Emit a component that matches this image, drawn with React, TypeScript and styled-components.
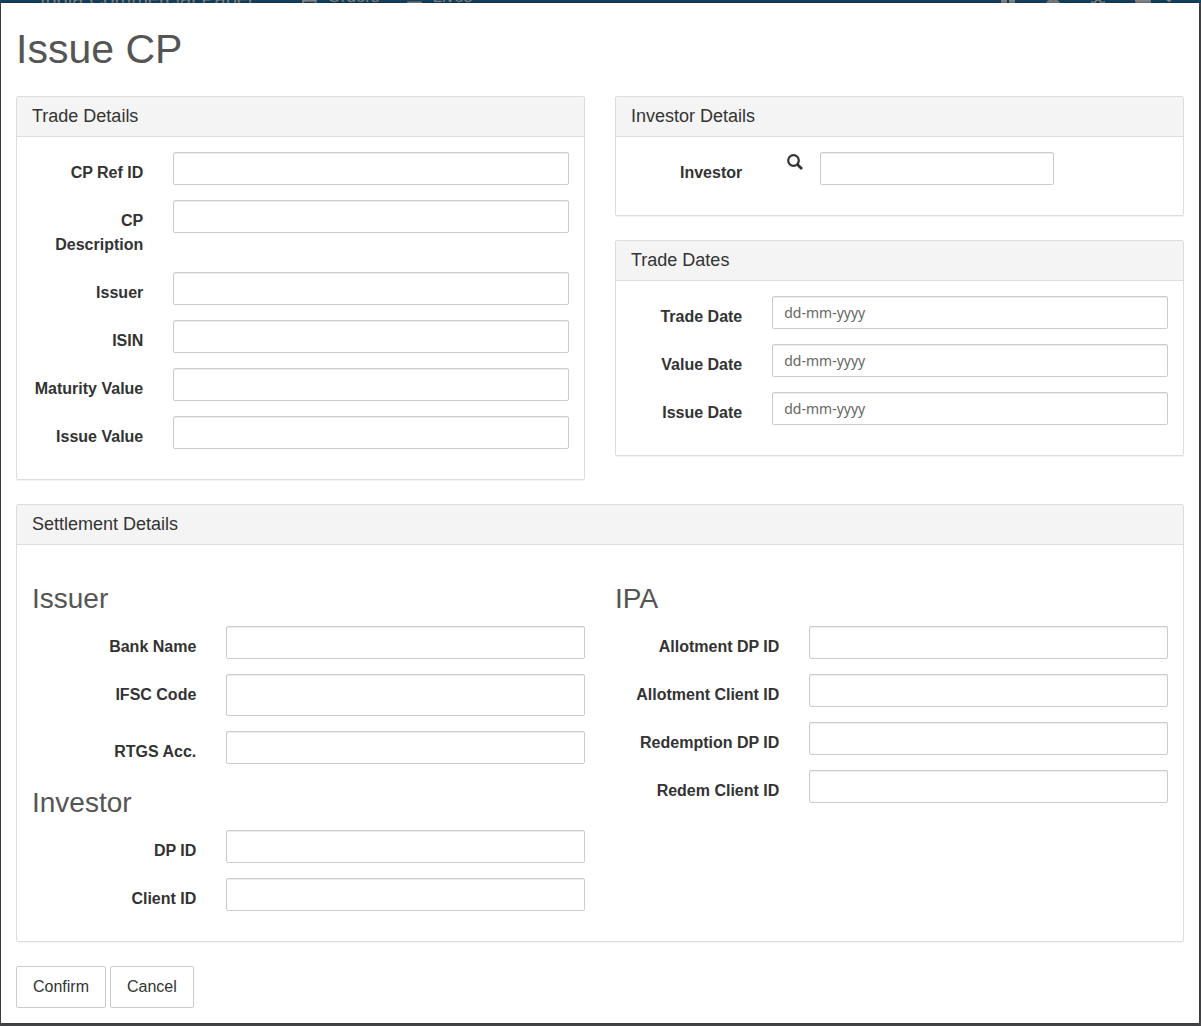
import React, { useId } from "react";
import styled, { createGlobalStyle } from "styled-components";
import { FaBook, FaBars, FaPause, FaUser, FaExpandArrowsAlt, FaCloud, FaCaretDown } from "react-icons/fa";

const GlobalStyle = createGlobalStyle`
  *, *::before, *::after { box-sizing: border-box; }
  body {
    margin: 0;
    background: #4a4b4d;
    color: #333;
    font: 16px/24px "Liberation Sans", Arial, sans-serif;
  }
  input, button { font: inherit; color: inherit; }
`;

const Page = styled.div`
  display: grid;
  grid-template-rows: 3px auto;
`;

const NavBar = styled.nav`
  display: flex;
  align-items: flex-end;
  gap: 26px;
  height: 3px;
  padding: 0 24px 0 40px;
  overflow: hidden;
  background: #154566;
  color: #8b8b8b;
`;

const Brand = styled.span`
  margin-right: 20px;
  font-size: 20px;
  line-height: 8px;
`;

const NavItem = styled.span`
  display: flex;
  align-items: center;
  gap: 10px;
  height: 12px;
  font-size: 17px;
  line-height: 12px;
`;

const NavTools = styled.div`
  display: flex;
  align-items: center;
  gap: 29px;
  height: 8px;
  margin-left: auto;
`;

const CloudMenu = styled.span`
  display: flex;
  align-items: center;
  gap: 10px;
`;

const Dialog = styled.main`
  margin: 0 2px 3px 1px;
  padding: 22px 15px 15px;
  background: #fff;
  box-shadow: 0 0 4px rgba(0, 0, 0, 0.5);
`;

const Title = styled.h1`
  margin: 0 0 23px;
  color: #555;
  font-size: 41px;
  font-weight: 400;
  line-height: 48px;
`;

const Columns = styled.div`
  display: grid;
  grid-template-columns: repeat(2, minmax(0, 1fr));
  align-items: start;
  gap: 30px;
`;

const Panel = styled.section`
  margin-bottom: 24px;
  border: 1px solid #ddd;
  border-radius: 2px;
  background: #fff;
  box-shadow: 0 1px 1px rgba(0, 0, 0, 0.05);
`;

const PanelHeading = styled.h2`
  margin: 0;
  padding: 9px 15px 10px;
  border-bottom: 1px solid #ddd;
  background: #f4f4f4;
  font-size: 18px;
  font-weight: 400;
  line-height: 20px;
`;

const PanelBody = styled.div`
  padding: 15px;
`;

const SettlementBody = styled(PanelBody)`
  padding-top: 30px;
`;

const SubHeading = styled.h3`
  margin: 0;
  padding: 6px 0 9px;
  color: #555;
  font-size: 28px;
  font-weight: 400;
  line-height: 36px;
`;

const Row = styled.div<{ $label: string }>`
  display: grid;
  grid-template-columns: ${(p) => p.$label} minmax(0, 1fr);
  align-items: start;
  column-gap: 30px;
  margin-bottom: 15px;
`;

const Label = styled.label`
  padding-top: 9px;
  font-weight: 700;
  text-align: right;
`;

const Input = styled.input<{ $tall?: boolean }>`
  width: 100%;
  height: ${(p) => (p.$tall ? 42 : 33)}px;
  padding: 0 11px;
  border: 1px solid #ccc;
  border-radius: 2px;
  background: #fff;
  box-shadow: inset 0 1px 1px rgba(0, 0, 0, 0.075);
  &::placeholder { color: #666; opacity: 1; }
`;

const DateInput = styled(Input)`
  font-family: "Noto Sans", sans-serif;
  font-size: 14px;
`;

const Lookup = styled.div`
  display: grid;
  grid-template-columns: 16px minmax(0, 234px);
  align-items: start;
  gap: 17px;
  padding-left: 15px;
`;

const SearchButton = styled.button`
  display: flex;
  padding: 2px 0 0;
  border: 0;
  background: none;
`;

const Actions = styled.div`
  display: flex;
  gap: 4px;
`;

const Button = styled.button`
  height: 42px;
  padding: 0 16px;
  border: 1px solid #ccc;
  border-radius: 2px;
  background: #fff;
`;

type FieldProps = { label: string; kind?: "text" | "date"; tall?: boolean; wide?: boolean };

function Field({ label, kind = "text", tall, wide }: FieldProps) {
  const id = useId();
  return (
    <Row $label={wide ? "calc(33.33% - 20px)" : "calc(25% - 23px)"}>
      <Label htmlFor={id}>{label}</Label>
      {kind === "date" ? (
        <DateInput id={id} placeholder="dd-mm-yyyy" />
      ) : (
        <Input id={id} $tall={tall} />
      )}
    </Row>
  );
}

function InvestorField() {
  const id = useId();
  return (
    <Row $label="calc(25% - 23px)">
      <Label htmlFor={id}>Investor</Label>
      <Lookup>
        <SearchButton type="button" aria-label="Search investor">
          <svg width="16" height="16" viewBox="0 0 16 16" fill="none" stroke="#333">
            <circle cx="6.5" cy="6.5" r="5.3" strokeWidth="2.2" />
            <path d="M10.4 10.4 15 15" strokeWidth="2.8" />
          </svg>
        </SearchButton>
        <Input id={id} />
      </Lookup>
    </Row>
  );
}

export default function App() {
  return (
    <>
      <GlobalStyle />
      <Page>
        <NavBar>
          <Brand>India Commercial Paper</Brand>
          <NavItem><FaBook />Orders</NavItem>
          <NavItem><FaBars />Lives</NavItem>
          <NavTools>
            <FaPause />
            <FaUser />
            <FaExpandArrowsAlt />
            <CloudMenu><FaCloud /><FaCaretDown /></CloudMenu>
          </NavTools>
        </NavBar>
        <Dialog>
          <Title>Issue CP</Title>
          <form onSubmit={(e) => e.preventDefault()}>
            <Columns>
              <Panel>
                <PanelHeading>Trade Details</PanelHeading>
                <PanelBody>
                  <Field label="CP Ref ID" />
                  <Field label="CP Description" />
                  <Field label="Issuer" />
                  <Field label="ISIN" />
                  <Field label="Maturity Value" />
                  <Field label="Issue Value" />
                </PanelBody>
              </Panel>
              <div>
                <Panel>
                  <PanelHeading>Investor Details</PanelHeading>
                  <PanelBody>
                    <InvestorField />
                  </PanelBody>
                </Panel>
                <Panel>
                  <PanelHeading>Trade Dates</PanelHeading>
                  <PanelBody>
                    <Field label="Trade Date" kind="date" />
                    <Field label="Value Date" kind="date" />
                    <Field label="Issue Date" kind="date" />
                  </PanelBody>
                </Panel>
              </div>
            </Columns>
            <Panel>
              <PanelHeading>Settlement Details</PanelHeading>
              <SettlementBody>
                <Columns>
                  <div>
                    <SubHeading>Issuer</SubHeading>
                    <Field wide label="Bank Name" />
                    <Field wide label="IFSC Code" tall />
                    <Field wide label="RTGS Acc." />
                    <SubHeading>Investor</SubHeading>
                    <Field wide label="DP ID" />
                    <Field wide label="Client ID" />
                  </div>
                  <div>
                    <SubHeading>IPA</SubHeading>
                    <Field wide label="Allotment DP ID" />
                    <Field wide label="Allotment Client ID" />
                    <Field wide label="Redemption DP ID" />
                    <Field wide label="Redem Client ID" />
                  </div>
                </Columns>
              </SettlementBody>
            </Panel>
            <Actions>
              <Button type="submit">Confirm</Button>
              <Button type="button">Cancel</Button>
            </Actions>
          </form>
        </Dialog>
      </Page>
    </>
  );
}
